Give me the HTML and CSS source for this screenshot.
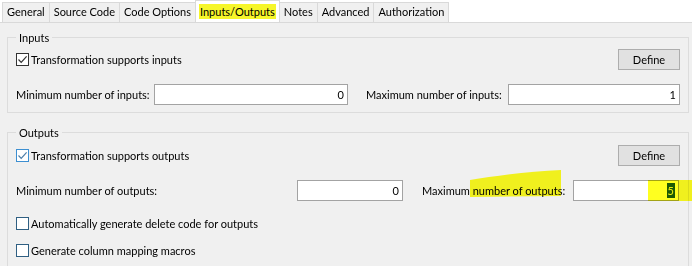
FILE: index.html
```html
<!DOCTYPE html>
<html lang="en">
<head>
    <meta charset="UTF-8">
    <title>Inputs/Outputs</title>
    <link rel="stylesheet" href="styles.css">
</head>
<body>
    <div class="tabs">
        <div class="tab">General</div>
        <div class="tab">Source Code</div>
        <div class="tab">Code Options</div>
        <div class="tab tab-active"><span class="marker">Inputs/Outputs</span></div>
        <div class="tab">Notes</div>
        <div class="tab">Advanced</div>
        <div class="tab">Authorization</div>
    </div>

    <div class="panel">
        <fieldset class="group">
            <legend>Inputs</legend>
            <div class="row row-top">
                <div class="check">
                    <span class="box"><svg width="11" height="11" viewBox="0 0 11 11"><path d="M1.5 5.5 L4.2 8.3 L9.6 2.4" fill="none" stroke="#333" stroke-width="1.2"/></svg></span>
                    Transformation supports inputs
                </div>
                <div class="btn">Define</div>
            </div>
            <div class="row row-fields">
                <span class="lbl in-min">Minimum number of inputs:</span>
                <span class="field in-min-field">0</span>
                <span class="lbl in-max">Maximum number of inputs:</span>
                <span class="field in-max-field">1</span>
            </div>
        </fieldset>

        <fieldset class="group group-outputs">
            <legend>Outputs</legend>
            <div class="row row-top">
                <div class="check">
                    <span class="box box-focus"><svg width="11" height="11" viewBox="0 0 11 11"><path d="M1.5 5.5 L4.2 8.3 L9.6 2.4" fill="none" stroke="#4d7ea8" stroke-width="1.2"/></svg></span>
                    Transformation supports outputs
                </div>
                <div class="btn">Define</div>
            </div>
            <div class="row row-fields">
                <span class="lbl out-min">Minimum number of outputs:</span>
                <span class="field out-field">0</span>
                <span class="lbl out-max">Maximum number of outputs:</span>
                <span class="field out-field"><span class="selected">5</span></span>
            </div>
            <div class="row row-check">
                <div class="check"><span class="box box-blue"></span>Automatically generate delete code for outputs</div>
            </div>
            <div class="row row-check row-last">
                <div class="check"><span class="box box-blue"></span>Generate column mapping macros</div>
            </div>
        </fieldset>
    </div>

    <svg class="scribble" width="692" height="266" viewBox="0 0 692 266">
        <path d="M470 180 C495 176 530 171 561 170 L561 196 L470 197 Z" fill="#ffff20"/>
        <rect x="648" y="180" width="44" height="21" fill="#ffff20"/>
    </svg>
</body>
</html>
```

FILE: styles.css
```css
* {
    box-sizing: border-box;
}

body {
    margin: 0;
    width: 692px;
    height: 266px;
    overflow: hidden;
    position: relative;
    background-color: #ffffff;
    font-family: Lato, 'Liberation Sans', sans-serif;
    font-size: 11px;
    color: #000;
    white-space: nowrap;
}

.tabs {
    display: flex;
    align-items: flex-end;
    height: 22px;
    padding-left: 2px;
}

.tab {
    height: 20px;
    line-height: 18px;
    padding: 0 4px;
    background-color: #f0f0f0;
    border: 1px solid #d9d9d9;
    border-bottom: none;
    margin-left: -1px;
}

.tab:first-child {
    margin-left: 0;
}

.tab-active {
    height: 22px;
    padding: 2px 3px 0;
    background-color: #ffffff;
    position: relative;
    z-index: 1;
}

.marker {
    background-color: #f6f62a;
    padding: 1px 1px;
}

.panel {
    height: 244px;
    background-color: #f0f0f0;
    border-top: 1px solid #d9d9d9;
    padding: 7px 3px 0 7px;
}

.group {
    margin: 0;
    border: 1px solid #dcdcdc;
    padding: 4px 8px 7px 8px;
}

.group legend {
    padding: 0 3px;
    line-height: 15px;
}

.group-outputs {
    margin-top: 12px;
    padding-top: 5px;
}

.row {
    display: flex;
    align-items: center;
    height: 21px;
}

.row-top {
    justify-content: space-between;
}

.row-fields {
    margin-top: 14px;
}

.row-check {
    margin-top: 12px;
}

.row-last {
    margin-top: 6px;
}

.check {
    display: flex;
    align-items: center;
}

.box {
    width: 13px;
    height: 13px;
    margin-right: 2px;
    background-color: #fff;
    border: 1px solid #333;
    display: flex;
}

.box-focus {
    border-color: #3d8fd1;
}

.box-blue {
    border-color: #2f5f82;
}

.btn {
    width: 62px;
    height: 21px;
    line-height: 19px;
    text-align: center;
    background-color: #e1e1e1;
    border: 1px solid #adadad;
}

.field {
    height: 21px;
    line-height: 19px;
    background-color: #fff;
    border: 1px solid #a3a3a3;
    text-align: right;
    padding-right: 3px;
}

.in-min { width: 138px; }
.in-min-field { width: 194px; }
.in-max { width: 142px; margin-left: 18px; }
.in-max-field { width: 172px; }

.out-min { width: 281px; }
.out-max { width: 151px; margin-left: 19px; }
.out-field { width: 106px; }

.selected {
    background-color: #1d5a14;
    color: #eef27a;
    padding: 1px 1px;
}

.scribble {
    position: absolute;
    left: 0;
    top: 0;
    mix-blend-mode: multiply;
    pointer-events: none;
}
```
